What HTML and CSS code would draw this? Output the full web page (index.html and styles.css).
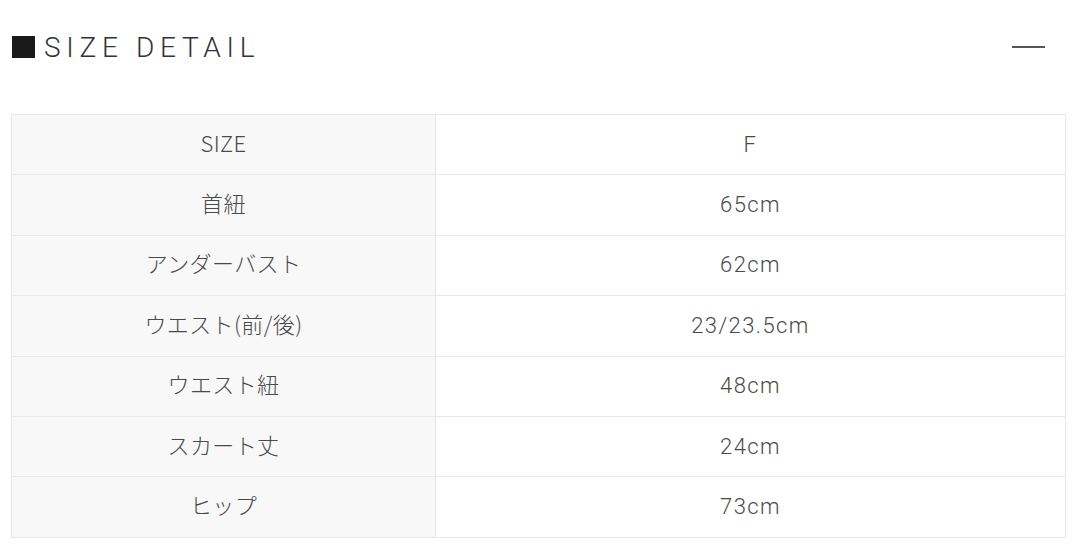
FILE: index.html
```html
<!DOCTYPE html>
<html lang="ja">
<head>
<meta charset="utf-8">
<link rel="stylesheet" href="styles.css">
</head>
<body>
<div class="page">
  <div class="header">
    <h2 class="title"><span class="square"></span>SIZE DETAIL</h2>
    <span class="toggle"></span>
  </div>
  <table class="size-table">
    <tr><th>SIZE</th><td>F</td></tr>
    <tr><th>首紐</th><td>65cm</td></tr>
    <tr><th>アンダーバスト</th><td>62cm</td></tr>
    <tr><th>ウエスト(前/後)</th><td>23/23.5cm</td></tr>
    <tr><th>ウエスト紐</th><td>48cm</td></tr>
    <tr><th>スカート丈</th><td>24cm</td></tr>
    <tr><th>ヒップ</th><td>73cm</td></tr>
  </table>
</div>
</body>
</html>
```

FILE: styles.css
```css
html, body { margin: 0; padding: 0; background: #fff; }
body { font-family: Roboto, "Noto Sans CJK JP", sans-serif; color: #555; }
.page { padding: 0 14px 0 11px; }
.header {
  display: flex;
  align-items: center;
  justify-content: space-between;
  height: 94px;
  padding-right: 21px;
}
.title {
  margin: 0;
  display: flex;
  align-items: center;
  font-weight: 300;
  font-size: 28px;
  letter-spacing: 5.7px;
  color: #333;
  padding-left: 1px;
}
.square {
  display: inline-block;
  width: 23px;
  height: 22px;
  background: #1a1a1a;
  margin-right: 9px;
}
.toggle {
  display: block;
  width: 33px;
  height: 2px;
  background: #555;
}
.size-table {
  margin-top: 20px;
  width: 1055px;
  border-collapse: collapse;
  border: 1px solid #e5e5e5;
  box-shadow: 0 1px 1px #eee;
}
.size-table th, .size-table td {
  box-sizing: border-box;
  height: 60.4px;
  border: 1px solid #e8e8e8;
  text-align: center;
  vertical-align: middle;
  font-weight: 300;
  font-size: 22px;
  line-height: 30px;
  color: #4a4a4a;
  padding: 0;
}
.size-table th {
  width: 424px;
  background: #f8f8f8;
  font-family: "Noto Sans CJK JP", sans-serif;
  letter-spacing: 0.4px;
  padding-bottom: 6px;
}
.size-table td {
  background: #fff;
  letter-spacing: 1.4px;
}
```
